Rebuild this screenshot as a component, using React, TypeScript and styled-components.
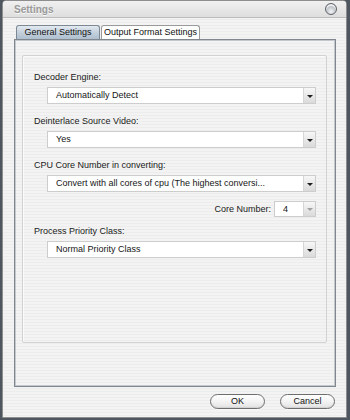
import React from "react";
import styled, { createGlobalStyle } from "styled-components";

const Global = createGlobalStyle`
  html, body {
    margin: 0;
    padding: 0;
    background: #4e565f;
    font-family: "Liberation Sans", Arial, sans-serif;
  }
`;

const stripes = `repeating-linear-gradient(
  to bottom,
  #ececec 0px,
  #ececec 1px,
  #f3f3f3 1px,
  #f3f3f3 3px
)`;

const Frame = styled.div`
  margin-left: 2px;
  width: 345px;
  height: 418px;
  box-sizing: border-box;
  border: 1px solid #8e8e8e;
  border-radius: 4px 4px 0 0;
  background: ${stripes};
  overflow: hidden;
`;

const TitleBar = styled.div`
  height: 16px;
  display: flex;
  align-items: center;
  justify-content: space-between;
  padding: 0 9px 0 11px;
  background: linear-gradient(to bottom, #f0f0f0, #dedede);
  border-bottom: 1px solid #bcbcbc;
`;

const Title = styled.span`
  font-size: 10px;
  font-weight: bold;
  color: #9a9a9a;
  text-shadow: 0 1px 0 #f8f8f8;
`;

const CloseDot = styled.span`
  width: 10px;
  height: 10px;
  border-radius: 50%;
  border: 1px solid #5f6368;
  background: radial-gradient(circle at 50% 75%, #f2f4f6 0%, #bcc1c7 55%, #8a9096 100%);
  box-shadow: inset 0 2px 1px rgba(255, 255, 255, 0.85);
`;

const Content = styled.div`
  padding: 7px 10px 0 11px;
`;

const TabRow = styled.div`
  display: flex;
  gap: 1px;
  padding-left: 2px;
  height: 14px;
`;

const Tab = styled.div<{ $active?: boolean }>`
  width: ${(p) => (p.$active ? 84 : 99)}px;
  box-sizing: border-box;
  height: 14px;
  border: 1px solid ${(p) => (p.$active ? "#7c8894" : "#9a9a9a")};
  border-bottom: none;
  border-radius: 3px 3px 0 0;
  background: ${(p) =>
    p.$active
      ? "linear-gradient(to bottom, #e3eaf1 0%, #c4d0dc 50%, #aebfcf 100%)"
      : "#ffffff"};
  font-size: 9px;
  line-height: 13px;
  color: #111;
  text-align: center;
`;

const Panel = styled.div`
  height: 348px;
  box-sizing: border-box;
  border: 1px solid #80878e;
  box-shadow: inset 0 0 0 1px #c3c7cb;
  padding: 15px 0 0 7px;
  background: ${stripes};
`;

const Group = styled.div`
  width: 305px;
  height: 288px;
  box-sizing: border-box;
  border: 1px solid #d2d2d2;
  border-radius: 2px;
  box-shadow: inset 1px 1px 0 #fafafa;
  padding: 14px 10px 0 11px;
`;

const Field = styled.div`
  margin-bottom: 10px;
`;

const Label = styled.div`
  font-size: 9px;
  line-height: 14px;
  height: 14px;
  color: #1a1a1a;
`;

const Combo = styled.div<{ $width?: number }>`
  margin: 3px 0 0 ${(p) => (p.$width ? 0 : 13)}px;
  width: ${(p) => p.$width ?? 269}px;
  height: 17px;
  box-sizing: border-box;
  border: 1px solid #cdcdcd;
  background: #fff;
  display: flex;
  align-items: stretch;
`;

const ComboText = styled.span`
  flex: 1;
  font-size: 9px;
  line-height: 15px;
  padding-left: 8px;
  color: #151515;
  white-space: nowrap;
  overflow: hidden;
`;

const Arrow = styled.span<{ $disabled?: boolean }>`
  width: 11px;
  border-left: 1px solid #d6d6d6;
  background: linear-gradient(to bottom, #f7f7f7, #dadada);
  display: flex;
  align-items: center;
  justify-content: center;

  &::after {
    content: "";
    width: 0;
    height: 0;
    border-left: 3px solid transparent;
    border-right: 3px solid transparent;
    border-top: 3px solid ${(p) => (p.$disabled ? "#a0a0a0" : "#1e1e1e")};
    margin-top: 1px;
  }
`;

const CoreRow = styled.div`
  display: flex;
  justify-content: flex-end;
  align-items: center;
  gap: 3px;
  margin-top: -1px;
  margin-bottom: 7px;

  ${Combo} {
    margin: 0;
    height: 16px;
  }
`;

const ButtonRow = styled.div`
  display: flex;
  justify-content: flex-end;
  gap: 15px;
  margin-top: 7px;
  padding-right: 1px;
`;

const PillButton = styled.button`
  width: 55px;
  height: 15px;
  padding: 0;
  border: 1px solid #6e6e6e;
  border-radius: 8px;
  background: linear-gradient(to bottom, #ffffff 0%, #f3f3f3 50%, #e2e2e2 100%);
  box-shadow: inset 0 -1px 1px rgba(0, 0, 0, 0.08), 0 1px 0 #fafafa;
  font-family: "Liberation Sans", Arial, sans-serif;
  font-size: 9px;
  line-height: 13px;
  color: #111;
`;

type FieldProps = { label: string; value: string };

const SelectField = ({ label, value }: FieldProps) => (
  <Field>
    <Label>{label}</Label>
    <Combo>
      <ComboText>{value}</ComboText>
      <Arrow />
    </Combo>
  </Field>
);

const App = () => {
  return (
    <>
      <Global />
      <Frame>
        <TitleBar>
          <Title>Settings</Title>
          <CloseDot />
        </TitleBar>
        <Content>
          <TabRow>
            <Tab $active>General Settings</Tab>
            <Tab>Output Format Settings</Tab>
          </TabRow>
          <Panel>
            <Group>
              <SelectField label="Decoder Engine:" value="Automatically Detect" />
              <SelectField label="Deinterlace Source Video:" value="Yes" />
              <SelectField
                label="CPU Core Number in converting:"
                value="Convert with all cores of cpu (The highest conversi..."
              />
              <CoreRow>
                <Label>Core Number:</Label>
                <Combo $width={42}>
                  <ComboText>4</ComboText>
                  <Arrow $disabled />
                </Combo>
              </CoreRow>
              <SelectField label="Process Priority Class:" value="Normal Priority Class" />
            </Group>
          </Panel>
          <ButtonRow>
            <PillButton>OK</PillButton>
            <PillButton>Cancel</PillButton>
          </ButtonRow>
        </Content>
      </Frame>
    </>
  );
};

export default App;
